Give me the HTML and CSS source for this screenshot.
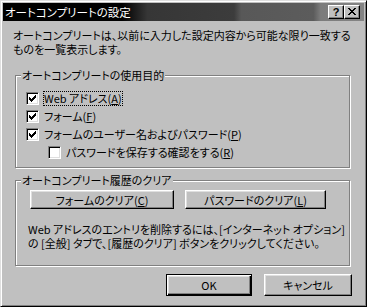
FILE: index.html
```html
<!DOCTYPE html>
<html lang="ja">
<head>
<meta charset="utf-8">
<title>オートコンプリートの設定</title>
<link rel="stylesheet" href="styles.css">
</head>
<body>
<div class="win">
  <div class="titlebar">
    <span class="title">オートコンプリートの設定</span>
    <span class="tbtn help">?</span>
    <span class="tbtn close"><svg width="8" height="7" viewBox="0 0 8 7" shape-rendering="crispEdges"><path d="M0 0h2v1H0zM6 0h2v1H6zM1 1h2v1H1zM5 1h2v1H5zM2 2h4v1H2zM3 3h2v1H3zM2 4h4v1H2zM1 5h2v1H1zM5 5h2v1H5zM0 6h2v1H0zM6 6h2v1H6z" fill="#000"/></svg></span>
  </div>
  <div class="content">
    <p class="intro">オートコンプリートは、以前に入力した設定内容から可能な限り一致する<br>ものを一覧表示します。</p>

    <div class="group g1">
      <span class="legend">オートコンプリートの使用目的</span>
      <div class="rows">
        <div class="row"><span class="cb checked"><svg width="7" height="7" viewBox="0 0 7 7" shape-rendering="crispEdges"><path d="M6 0h1v1H6zM5 1h2v1H5zM0 2h1v1H0zM4 2h3v1H4zM0 3h2v1H0zM3 3h3v1H3zM0 4h5v1H0zM1 5h3v1H1zM2 6h1v1H2z" fill="#000"/></svg></span><span class="lbl focus">Web アドレス(<u>A</u>)</span></div>
        <div class="row"><span class="cb checked"><svg width="7" height="7" viewBox="0 0 7 7" shape-rendering="crispEdges"><path d="M6 0h1v1H6zM5 1h2v1H5zM0 2h1v1H0zM4 2h3v1H4zM0 3h2v1H0zM3 3h3v1H3zM0 4h5v1H0zM1 5h3v1H1zM2 6h1v1H2z" fill="#000"/></svg></span><span class="lbl">フォーム(<u>F</u>)</span></div>
        <div class="row"><span class="cb checked"><svg width="7" height="7" viewBox="0 0 7 7" shape-rendering="crispEdges"><path d="M6 0h1v1H6zM5 1h2v1H5zM0 2h1v1H0zM4 2h3v1H4zM0 3h2v1H0zM3 3h3v1H3zM0 4h5v1H0zM1 5h3v1H1zM2 6h1v1H2z" fill="#000"/></svg></span><span class="lbl">フォームのユーザー名およびパスワード(<u>P</u>)</span></div>
        <div class="row sub"><span class="cb"></span><span class="lbl">パスワードを保存する確認をする(<u>R</u>)</span></div>
      </div>
    </div>

    <div class="group g2">
      <span class="legend">オートコンプリート履歴のクリア</span>
      <div class="clearbtns">
        <span class="btn b1">フォームのクリア(<u>C</u>)</span>
        <span class="btn b2">パスワードのクリア(<u>L</u>)</span>
      </div>
      <p class="note">Web アドレスのエントリを削除するには、[インターネット オプション]<br>の [全般] タブで、[履歴のクリア] ボタンをクリックしてください。</p>
    </div>

    <div class="footer">
      <span class="btn ok default">OK</span>
      <span class="btn cancel">キャンセル</span>
    </div>
  </div>
</div>
</body>
</html>
```

FILE: styles.css
```css
* { box-sizing: border-box; }
html, body { margin: 0; padding: 0; background: #c0c0c0; }
body {
  font-family: "Noto Sans CJK JP", "Noto Sans", sans-serif;
  font-size: 11px;
  line-height: 14px;
  color: #000;
  font-feature-settings: "palt";
}
u { text-decoration: underline; text-underline-offset: 1px; }
p { margin: 0; }

.win {
  width: 367px;
  height: 307px;
  background: #c0c0c0;
  border: 1px solid;
  border-color: #dfdfdf #000 #000 #dfdfdf;
  box-shadow: inset 1px 1px 0 #fff, inset -1px -1px 0 #808080;
  padding: 2px;
  display: flex;
  flex-direction: column;
}

.titlebar {
  height: 18px;
  display: flex;
  align-items: center;
  background: linear-gradient(to right, #000 0%, #000 33%, #363636 40%, #3c3c3c 64%, #585858 66%, #5c5c5c 86%, #7c7c7c 88%, #848484 100%);
  padding-right: 4px;
}
.title {
  color: #fff;
  padding-left: 2px;
  flex: 1;
  white-space: nowrap;
  font-size: 11.5px;
}
.tbtn {
  width: 16px;
  height: 14px;
  background: #c0c0c0;
  border: 1px solid;
  border-color: #fff #000 #000 #fff;
  box-shadow: inset -1px -1px 0 #808080;
  display: flex;
  align-items: center;
  justify-content: center;
}
.tbtn.help {
  font-family: "Liberation Sans", sans-serif;
  font-weight: bold;
  font-size: 11px;
  line-height: 12px;
  padding-bottom: 1px;
}
.tbtn.close svg { margin-bottom: 1px; }

.content {
  flex: 1;
  display: flex;
  flex-direction: column;
}

.intro {
  margin: 7px 0 0 10px;
  white-space: nowrap;
}

.group {
  position: relative;
  margin-left: 12px;
  width: 335px;
  border: 1px solid #808080;
  box-shadow: inset 1px 1px 0 #fff, 1px 1px 0 #fff;
}
.legend {
  position: absolute;
  top: -8px;
  left: 5px;
  padding: 0 1px;
  background: #c0c0c0;
  white-space: nowrap;
}

.g1 {
  margin-top: 19px;
  height: 93px;
  padding: 16px 0 0 10px;
}
.rows {
  display: flex;
  flex-direction: column;
  gap: 5px;
}
.row {
  height: 13px;
  display: flex;
  align-items: center;
  white-space: nowrap;
}
.row.sub { padding-left: 22px; }

.cb {
  flex: none;
  width: 13px;
  height: 13px;
  border: 1px solid;
  border-color: #808080 #fff #fff #808080;
  background: #fff;
  box-shadow: inset 1px 1px 0 #000, inset -1px -1px 0 #dfdfdf;
  display: flex;
  align-items: center;
  justify-content: center;
}
.lbl {
  margin-left: 4px;
  border: 1px solid transparent;
  line-height: 13px;
}
.lbl.focus { border: 1px dotted #000; }

.g2 {
  margin-top: 12px;
  height: 86px;
  padding: 9px 0 0 12px;
}
.clearbtns {
  display: flex;
  gap: 11px;
  margin-left: 2px;
}
.btn {
  display: flex;
  align-items: center;
  justify-content: center;
  background: #c0c0c0;
  border: 1px solid;
  border-color: #fff #000 #000 #fff;
  box-shadow: inset -1px -1px 0 #808080, inset 1px 1px 0 #dfdfdf;
  white-space: nowrap;
}
.b1 { width: 144px; height: 19px; }
.b2 { width: 141px; height: 19px; }

.note {
  margin-top: 13px;
  white-space: nowrap;
}

.footer {
  margin-top: 8px;
  display: flex;
  justify-content: flex-end;
  gap: 12px;
  padding-right: 12px;
}
.ok { width: 86px; height: 22px; }
.cancel { width: 88px; height: 22px; }
.btn.default {
  border: 1px solid #000;
  box-shadow: inset 1px 1px 0 #fff, inset -1px -1px 0 #000, inset -2px -2px 0 #808080, inset 2px 2px 0 #dfdfdf;
}
```
